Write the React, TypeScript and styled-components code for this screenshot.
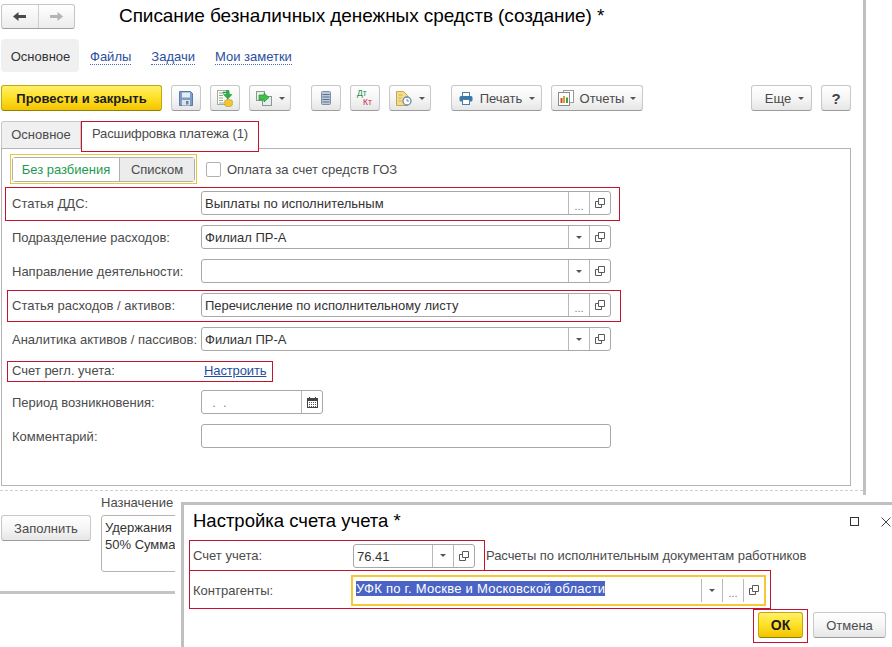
import React from "react";
import styled, { createGlobalStyle, css } from "styled-components";

const Global = createGlobalStyle`
  html, body { margin: 0; padding: 0; background: #fff; }
  * { box-sizing: border-box; }
  body { font-family: "Liberation Sans", Arial, sans-serif; font-size: 13px; color: #4b4b4b; }
`;

const Screen = styled.div`
  position: relative;
  width: 892px;
  height: 647px;
  overflow: hidden;
  background: #fff;
`;

const Main = styled.div`
  width: 866px;
  height: 647px;
  border-right: 3px solid #c0c0c0;
  display: flex;
  flex-direction: column;
`;

const Header = styled.div`
  display: flex;
  align-items: flex-start;
  height: 39px;
  padding: 4px 0 0 1px;
`;

const NavGroup = styled.div`
  display: flex;
  width: 74px;
  height: 25px;
  border: 1px solid #c6c6c6;
  border-bottom-color: #a0a0a0;
  border-radius: 3px;
  background: linear-gradient(#ffffff, #ececec);
`;

const NavCell = styled.div<{ $sep?: boolean }>`
  flex: 1;
  display: flex;
  align-items: center;
  justify-content: center;
  ${(p) => p.$sep && css`border-left: 1px solid #cfcfcf;`}
`;

const Title = styled.h1`
  margin: -1px 0 0 44px;
  font-size: 19px;
  line-height: 26px;
  letter-spacing: -0.07px;
  font-weight: 400;
  color: #000;
  white-space: nowrap;
`;

const Sections = styled.nav`
  display: flex;
  align-items: center;
  height: 33px;
  padding-left: 1px;
`;

const ActiveSection = styled.div`
  width: 78px;
  height: 33px;
  padding: 1px 0 0 1px;
  display: flex;
  align-items: center;
  justify-content: center;
  background: #f0f0f0;
  border-radius: 4px;
  color: #333;
`;

const SectionLink = styled.a`
  margin: 3px 9px 0 11px;
  color: #2a4fa0;
  border-bottom: 1px dotted #4a6cb4;
  line-height: 14px;
`;

const Toolbar = styled.div`
  display: flex;
  align-items: center;
  height: 26px;
  margin-top: 13px;
  padding-left: 1px;
  width: 851px;
`;

const btnBase = css`
  height: 26px;
  border: 1px solid #c8c8c8;
  border-bottom-color: #9c9c9c;
  border-radius: 3px;
  background: linear-gradient(#ffffff 0%, #f6f6f6 50%, #e6e6e6 100%);
  display: inline-flex;
  align-items: center;
  justify-content: center;
  color: #4b4b4b;
  font-size: 13px;
  font-family: inherit;
  padding: 0;
  flex: none;
`;

const PrimaryBtn = styled.button<{ $w: number; $size?: number }>`
  ${btnBase}
  position: relative;
  width: ${(p) => p.$w}px;
  border-color: #bfa90f;
  border-bottom-color: #8f8000;
  background: linear-gradient(#fff06a 0%, #ffe22a 45%, #f3c400 100%);
  color: #1c1c1c;
  font-weight: 700;
  font-size: ${(p) => p.$size ?? 13}px;
`;

const Btn = styled.button<{ $w: number; $ml?: number; $gap?: number; $pl?: number }>`
  ${btnBase}
  width: ${(p) => p.$w}px;
  margin-left: ${(p) => p.$ml ?? 9}px;
  gap: ${(p) => p.$gap ?? 0}px;
  padding-left: ${(p) => p.$pl ?? 0}px;
`;

const Caret = styled.span<{ $ml?: number }>`
  display: inline-block;
  width: 0;
  height: 0;
  border-left: 3px solid transparent;
  border-right: 3px solid transparent;
  border-top: 3px solid #555;
  margin-left: ${(p) => p.$ml ?? 0}px;
  flex: none;
`;

const Spacer = styled.div`
  flex: 1;
`;

const QuestionMark = styled.span`
  font-size: 15px;
  font-weight: 700;
  color: #444;
`;

const Tabs = styled.div`
  display: flex;
  height: 27px;
  margin: 10px 0 0 1px;
  width: 850px;
`;

const Tab = styled.div<{ $active?: boolean }>`
  position: relative;
  height: 27px;
  padding-bottom: 2px;
  display: flex;
  align-items: center;
  justify-content: center;
  color: #4b4b4b;
  ${(p) =>
    p.$active
      ? css`
          width: 178px;
          background: #fff;
          margin-bottom: -1px;
          height: 28px;
          padding-bottom: 3px;
          z-index: 1;
          letter-spacing: -0.1px;
        `
      : css`
          width: 80px;
          background: #f0f0f0;
          border: 1px solid #c8c8c8;
          border-bottom: 0;
          border-radius: 3px 0 0 0;
        `}
`;

const Panel = styled.div`
  width: 850px;
  height: 338px;
  margin-left: 1px;
  border: 1px solid #b4b4b4;
  display: flex;
  flex-direction: column;
  padding: 8px 0 0 10px;
`;

const SwitchRow = styled.div`
  display: flex;
  align-items: center;
  height: 25px;
  margin-bottom: 9px;
`;

const SwitchBox = styled.div`
  position: relative;
  display: flex;
  width: 183px;
  height: 25px;
  border: 1px solid #b0b0b0;
  border-radius: 3px;
  overflow: visible;
`;

const SwitchOn = styled.div`
  width: 107px;
  display: flex;
  align-items: center;
  justify-content: center;
  color: #1e9a50;
  background: #fff;
  border-right: 1px solid #b0b0b0;
`;

const SwitchOff = styled.div`
  flex: 1;
  display: flex;
  align-items: center;
  justify-content: center;
  background: #ececec;
  color: #4b4b4b;
`;

const Checkbox = styled.span`
  width: 15px;
  height: 15px;
  margin-left: 11px;
  border: 1px solid #b0b0b0;
  border-radius: 2px;
  background: #fff;
  flex: none;
`;

const CheckLabel = styled.span`
  margin-left: 6px;
`;

const Form = styled.div`
  display: flex;
  flex-direction: column;
  gap: 10px;
`;

const Row = styled.div<{ $h?: number }>`
  position: relative;
  display: flex;
  align-items: center;
  height: ${(p) => p.$h ?? 24}px;
`;

const Label = styled.div`
  width: 189px;
  flex: none;
  white-space: nowrap;
  color: #4b4b4b;
`;

const Field = styled.div<{ $w?: number }>`
  display: flex;
  align-items: stretch;
  width: ${(p) => p.$w ?? 410}px;
  height: 24px;
  border: 1px solid #a8a8a8;
  border-radius: 3px;
  background: #fff;
  flex: none;
`;

const FieldText = styled.div<{ $faint?: boolean }>`
  flex: 1;
  padding: 1px 0 0 3px;
  line-height: 22px;
  color: ${(p) => (p.$faint ? "#8a8a8a" : "#333")};
  white-space: nowrap;
  overflow: hidden;
`;

const FieldBtn = styled.div<{ $w?: number }>`
  position: relative;
  width: ${(p) => p.$w ?? 21}px;
  flex: none;
  border-left: 1px solid #b8b8b8;
  display: flex;
  align-items: center;
  justify-content: center;
  color: #777;
  font-size: 11px;
`;

const Dots = styled.span`
  margin-top: 5px;
  letter-spacing: 0;
`;

const Link = styled.a`
  margin-left: 3px;
  letter-spacing: -0.12px;
  color: #1f4fa3;
  text-decoration: underline;
`;

const Mark = styled.div<{ $t: number; $r: number; $b: number; $l: number; $yellow?: boolean }>`
  position: absolute;
  top: ${(p) => p.$t}px;
  right: ${(p) => p.$r}px;
  bottom: ${(p) => p.$b}px;
  left: ${(p) => p.$l}px;
  border: 1px solid ${(p) => (p.$yellow ? "#e8c53a" : "#c4122f")};
  pointer-events: none;
`;

const Bottom = styled.div`
  display: flex;
  flex-direction: column;
  margin-top: 4px;
`;

const DashLine = styled.div`
  height: 1px;
  border-top: 1px dashed #cfcfcf;
`;

const BottomRow = styled.div`
  display: flex;
  height: 100px;
  padding-left: 1px;
`;

const FillBtn = styled.button`
  ${btnBase}
  width: 90px;
  margin-top: 24px;
`;

const PurposeCol = styled.div`
  margin-left: 10px;
  width: 74px;
  overflow: hidden;
`;

const PurposeLabel = styled.div`
  height: 24px;
  line-height: 24px;
  white-space: nowrap;
`;

const PurposeBox = styled.div`
  width: 120px;
  height: 57px;
  border: 1px solid #b4b4b4;
  border-radius: 3px;
  padding: 3px;
  line-height: 17px;
  color: #333;
  white-space: nowrap;
`;

const BottomLine = styled.div`
  height: 3px;
  background: #c4c4c4;
`;

const Halo = styled.div`
  position: absolute;
  left: 175px;
  top: 495px;
  right: 0;
  bottom: 0;
  padding: 7px 0 0 6px;
  background: #fff;
`;

const Dialog = styled.div`
  height: 100%;
  border-top: 3px solid #c0c0c0;
  border-left: 3px solid #c0c0c0;
  display: flex;
  flex-direction: column;
`;

const DialogHead = styled.div`
  display: flex;
  align-items: center;
  height: 35px;
  padding: 0 1px 2px 9px;
`;

const DialogTitle = styled.div`
  flex: 1;
  margin-top: -1px;
  font-size: 18.5px;
  color: #000;
`;

const WinBtns = styled.div`
  display: flex;
  align-items: center;
  gap: 21px;
`;

const DialogRow = styled.div<{ $h: number }>`
  position: relative;
  display: flex;
  align-items: center;
  height: ${(p) => p.$h}px;
  padding-left: 9px;
`;

const DialogLabel = styled.div`
  width: 160px;
  flex: none;
`;

const AccountNote = styled.div`
  margin-left: 11px;
  letter-spacing: -0.06px;
  white-space: nowrap;
`;

const Selected = styled.span`
  background: #4a63c4;
  color: #fff;
  display: inline-block;
  line-height: 15px;
  letter-spacing: 0.26px;
`;

const FocusField = styled(Field)`
  margin-left: -2px;
  width: 415px;
  height: 31px;
  border: 2.5px solid #f3c93a;
  border-radius: 0;
  align-items: stretch;
`;

const FocusText = styled.div`
  flex: 1;
  padding: 4px 0 0 3px;
  line-height: 15px;
  white-space: nowrap;
`;

const InsetBtn = styled(FieldBtn)`
  margin: 2px 0;
`;

const DialogActions = styled.div`
  display: flex;
  justify-content: flex-end;
  padding: 3px 6px 0 0;
  gap: 10px;
`;

const Floppy = () => (
  <svg width="14" height="15" viewBox="0 0 14 15">
    <path d="M.5.500h11l2 2v12H.5z" fill="#7f9cc4" stroke="#5a7aa8" />
    <rect x="3" y="1.500" width="8" height="5" fill="#e4ecf6" />
    <rect x="3" y="9" width="8" height="5.500" fill="#dfe3e8" />
    <rect x="7" y="10" width="2.500" height="3.500" fill="#6a84a8" />
  </svg>
);

const PostIcon = () => (
  <svg width="16" height="17" viewBox="0 0 16 17">
    <rect x=".5" y=".5" width="10" height="14" fill="#fff" stroke="#a8a8a8" />
    <path d="M2 3h5M2 5.500h4M2 8h4M2 10.500h4M2 13h5" stroke="#8fa884" />
    <path d="M6 2h3.500V.5H12V2l.5 2.500H15L10.800 9 6.500 4.500h3V3H6z" fill="#2cae4a" stroke="#158a30" strokeWidth=".5" />
    <ellipse cx="11.500" cy="11" rx="3.800" ry="1.500" fill="#f2c832" stroke="#b8921a" strokeWidth=".6" />
    <path d="M7.700 11v4c0 .8 1.700 1.500 3.800 1.500s3.800-.7 3.800-1.500v-4" fill="#f2c832" stroke="#b8921a" strokeWidth=".6" />
  </svg>
);

const CopyIcon = () => (
  <svg width="16" height="15" viewBox="0 0 16 15">
    <rect x=".5" y=".5" width="8" height="9" fill="#eee" stroke="#8a9a8a" />
    <rect x="6.500" y="5.500" width="9" height="9" fill="#e8eef0" stroke="#8a9a8a" />
    <path d="M3 4h5V2l5 4.500L8 11V9H3z" fill="#3cc24a" stroke="#1d8a2c" strokeWidth=".6" />
  </svg>
);

const ListIcon = () => (
  <svg width="10" height="14" viewBox="0 0 10 14">
    <rect x=".5" y=".5" width="9" height="13" rx="1" fill="#b9c8da" stroke="#7d8fa6" />
    <path d="M1.500 3.500h7M1.500 6h7M1.500 8.500h7M1.500 11h7" stroke="#5f7288" />
  </svg>
);

const DtKt = () => (
  <svg width="18" height="18" viewBox="0 0 18 18">
    <text x="1" y="6.500" fontFamily="Liberation Sans" fontSize="8.500" fill="#1e8a4a">Дт</text>
    <text x="7" y="16" fontFamily="Liberation Sans" fontSize="8.500" fill="#c8283c">Кт</text>
  </svg>
);

const DocClock = () => (
  <svg width="16" height="15" viewBox="0 0 16 15">
    <path d="M.5.500h7l4 4v10H.5z" fill="#f4dc8a" stroke="#c4a850" />
    <path d="M2.500 4h4M2.500 7h3M2.500 10h3" stroke="#c8b060" />
    <circle cx="11" cy="10" r="4" fill="#fff" stroke="#6a8aa8" strokeWidth="1.300" />
    <path d="M11 8v2h2" stroke="#6a8aa8" fill="none" />
  </svg>
);

const Printer = () => (
  <svg width="14" height="13" viewBox="0 0 14 13">
    <rect x="3.500" y=".5" width="7" height="4" fill="#fff" stroke="#4c7ca8" />
    <rect x=".5" y="4" width="13" height="5.500" rx="1.500" fill="#3c78a8" />
    <rect x="3.500" y="7.500" width="7" height="5" fill="#fff" stroke="#4c7ca8" />
  </svg>
);

const Reports = () => (
  <svg width="16" height="16" viewBox="0 0 16 16">
    <rect x="5.500" y=".5" width="10" height="12" fill="#fff" stroke="#9a9a9a" />
    <rect x=".5" y="2.500" width="11" height="13" fill="#fff" stroke="#8a8a8a" />
    <rect x="2.500" y="8" width="2" height="5" fill="#c84838" />
    <rect x="5" y="6" width="2" height="7" fill="#d8a030" />
    <rect x="8" y="7.500" width="2" height="5.500" fill="#3ca04c" />
  </svg>
);

const OpenIcon = () => (
  <svg width="10" height="10" viewBox="0 0 10 10">
    <path d="M3.500.5h6v6h-6z" fill="none" stroke="#5a5a5a" />
    <path d="M3.500 3.500H.5v6h6V6.500" fill="none" stroke="#5a5a5a" />
  </svg>
);

const Calendar = () => (
  <svg width="11" height="11" viewBox="0 0 11 11">
    <path d="M2.500 0v2M8.500 0v2" stroke="#444" />
    <rect x=".5" y="1.500" width="10" height="9" fill="#fff" stroke="#444" />
    <rect x="1" y="2" width="9" height="2" fill="#444" />
    <path d="M2 5.500h7M2 7.500h7M2 9.500h7" stroke="#555" strokeDasharray="1 1" />
  </svg>
);

const Arrow = ({ dir, color }: { dir: "l" | "r"; color: string }) => (
  <svg width="15" height="11" viewBox="0 0 15 11">
    <path
      d={dir === "l" ? "M14 4H6.500V1L1 5.500 6.500 10V7H14z" : "M1 4h7.500V1L14 5.500 8.500 10V7H1z"}
      fill={color}
    />
  </svg>
);

const Maximize = () => (
  <svg width="10" height="10" viewBox="0 0 10 10">
    <rect x=".5" y=".5" width="8" height="8" fill="none" stroke="#333" />
  </svg>
);

const Close = () => (
  <svg width="10" height="10" viewBox="0 0 10 10">
    <path d="M.5.500l9 9M9.500.5l-9 9" stroke="#444" />
  </svg>
);

const FormRow = ({
  label,
  value,
  kind,
  mark,
}: {
  label: string;
  value?: string;
  kind: "select" | "choice";
  mark?: React.ReactNode;
}) => (
  <Row>
    <Label>{label}</Label>
    <Field>
      <FieldText>{value}</FieldText>
      <FieldBtn>{kind === "select" ? <Caret /> : <Dots>...</Dots>}</FieldBtn>
      <FieldBtn>
        <OpenIcon />
      </FieldBtn>
    </Field>
    {mark}
  </Row>
);

export default function App() {
  return (
    <Screen>
      <Global />
      <Main>
        <Header>
          <NavGroup>
            <NavCell>
              <Arrow dir="l" color="#4a4a4a" />
            </NavCell>
            <NavCell $sep>
              <Arrow dir="r" color="#b4b4b4" />
            </NavCell>
          </NavGroup>
          <Title>Списание безналичных денежных средств (создание) *</Title>
        </Header>
        <Sections>
          <ActiveSection>Основное</ActiveSection>
          <SectionLink>Файлы</SectionLink>
          <SectionLink>Задачи</SectionLink>
          <SectionLink>Мои заметки</SectionLink>
        </Sections>
        <Toolbar>
          <PrimaryBtn $w={161}>Провести и закрыть</PrimaryBtn>
          <Btn $w={30}>
            <Floppy />
          </Btn>
          <Btn $w={30}>
            <PostIcon />
          </Btn>
          <Btn $w={42} $gap={7}>
            <CopyIcon />
            <Caret />
          </Btn>
          <Btn $w={30} $ml={20}>
            <ListIcon />
          </Btn>
          <Btn $w={30}>
            <DtKt />
          </Btn>
          <Btn $w={42} $gap={7}>
            <DocClock />
            <Caret />
          </Btn>
          <Btn $w={91} $ml={20} $gap={7} $pl={1}>
            <Printer />
            Печать
            <Caret />
          </Btn>
          <Btn $w={92} $gap={6}>
            <Reports />
            Отчеты
            <Caret />
          </Btn>
          <Spacer />
          <Btn $w={61} $gap={7} $pl={6}>
            Еще
            <Caret />
          </Btn>
          <Btn $w={30}>
            <QuestionMark>?</QuestionMark>
          </Btn>
        </Toolbar>
        <Tabs>
          <Tab>Основное</Tab>
          <Tab $active>
            Расшифровка платежа (1)
            <Mark $t={0} $r={0} $b={-3} $l={0} />
          </Tab>
        </Tabs>
        <Panel>
          <SwitchRow>
            <SwitchBox>
              <SwitchOn>Без разбиения</SwitchOn>
              <SwitchOff>Списком</SwitchOff>
              <Mark $yellow $t={-4} $r={-3} $b={-3} $l={-3} />
            </SwitchBox>
            <Checkbox />
            <CheckLabel>Оплата за счет средств ГОЗ</CheckLabel>
          </SwitchRow>
          <Form>
            <FormRow
              label="Статья ДДС:"
              value="Выплаты по исполнительным"
              kind="choice"
              mark={<Mark $t={-4} $r={230} $b={-6} $l={-7} />}
            />
            <FormRow label="Подразделение расходов:" value="Филиал ПР-А" kind="select" />
            <FormRow label="Направление деятельности:" kind="select" />
            <FormRow
              label="Статья расходов / активов:"
              value="Перечисление по исполнительному листу"
              kind="choice"
              mark={<Mark $t={-3} $r={229} $b={-5} $l={-5} />}
            />
            <FormRow label="Аналитика активов / пассивов:" value="Филиал ПР-А" kind="select" />
            <Row $h={19}>
              <Label>Счет регл. учета:</Label>
              <Link>Настроить</Link>
              <Mark $t={0} $r={577} $b={-2} $l={-5} />
            </Row>
            <Row>
              <Label>Период возникновения:</Label>
              <Field $w={122}>
                <FieldText $faint>&nbsp;&nbsp;.&nbsp;&nbsp;.</FieldText>
                <FieldBtn>
                  <Calendar />
                </FieldBtn>
              </Field>
            </Row>
            <Row>
              <Label>Комментарий:</Label>
              <Field />
            </Row>
          </Form>
        </Panel>
        <Bottom>
          <DashLine />
          <BottomRow>
            <FillBtn>Заполнить</FillBtn>
            <PurposeCol>
              <PurposeLabel>Назначение</PurposeLabel>
              <PurposeBox>
                Удержания
                <br />
                50% Сумма
              </PurposeBox>
            </PurposeCol>
          </BottomRow>
          <BottomLine />
        </Bottom>
      </Main>
      <Halo>
        <Dialog>
          <DialogHead>
            <DialogTitle>Настройка счета учета *</DialogTitle>
            <WinBtns>
              <Maximize />
              <Close />
            </WinBtns>
          </DialogHead>
          <DialogRow $h={31}>
            <DialogLabel>Счет учета:</DialogLabel>
            <Field $w={122}>
              <FieldText>76.41</FieldText>
              <FieldBtn>
                <Caret />
              </FieldBtn>
              <FieldBtn>
                <OpenIcon />
              </FieldBtn>
            </Field>
            <AccountNote>Расчеты по исполнительным документам работников</AccountNote>
            <Mark $t={0} $r={407} $b={0} $l={5} />
          </DialogRow>
          <DialogRow $h={38}>
            <DialogLabel>Контрагенты:</DialogLabel>
            <FocusField>
              <FocusText>
                <Selected>УФК по г. Москве и Московской области</Selected>
              </FocusText>
              <InsetBtn>
                <Caret />
              </InsetBtn>
              <InsetBtn>
                <Dots>...</Dots>
              </InsetBtn>
              <InsetBtn>
                <OpenIcon />
              </InsetBtn>
            </FocusField>
            <Mark $t={-1} $r={121} $b={0} $l={5} />
          </DialogRow>
          <DialogActions>
            <PrimaryBtn $w={45} $size={14}>
              ОК
              <Mark $t={-4} $r={-6} $b={-6} $l={-6} />
            </PrimaryBtn>
            <Btn $w={73} $ml={0}>Отмена</Btn>
          </DialogActions>
        </Dialog>
      </Halo>
    </Screen>
  );
}
